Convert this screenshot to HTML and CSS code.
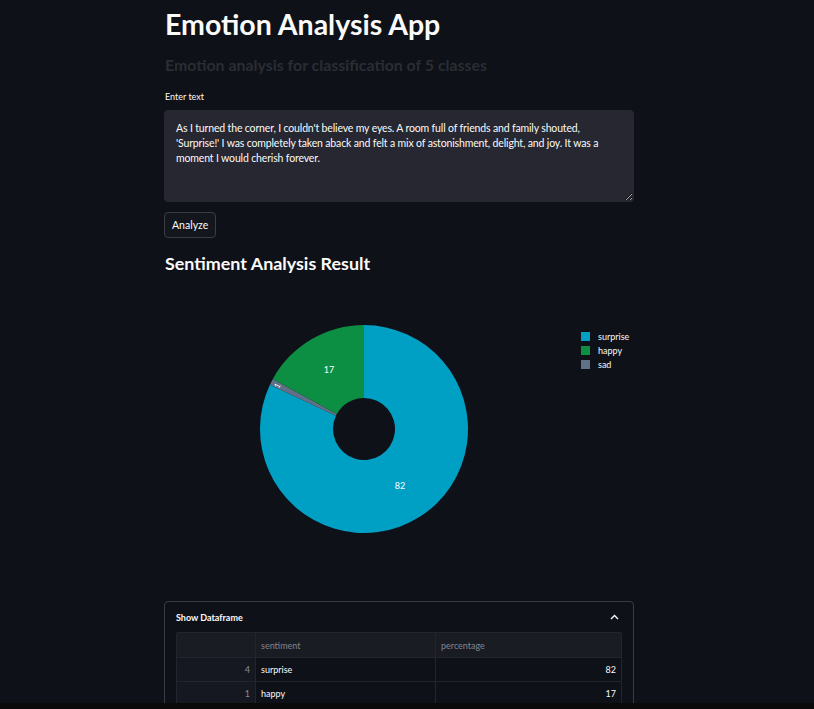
FILE: index.html
```html
<!DOCTYPE html>
<html lang="en">
<head>
<meta charset="utf-8">
<title>Emotion Analysis App</title>
<link rel="stylesheet" href="styles.css">
</head>
<body>
<main class="main">
  <h1 class="title">Emotion Analysis App</h1>
  <h3 class="subtitle">Emotion analysis for classification of 5 classes</h3>
  <label class="label" for="txt">Enter text</label>
  <div class="textarea-wrap">
    <textarea id="txt" class="textarea">As I turned the corner, I couldn't believe my eyes. A room full of friends and family shouted, 'Surprise!' I was completely taken aback and felt a mix of astonishment, delight, and joy. It was a moment I would cherish forever.</textarea>
  </div>
  <button class="btn">Analyze</button>
  <h2 class="h2">Sentiment Analysis Result</h2>
  <svg class="chart" width="470" height="300" viewBox="0 0 470 300">
    <path d="M200,42 A104,104 0 1 1 105.90,101.72 L171.95,132.80 A31,31 0 1 0 200,115 Z" fill="#009fc4"/>
    <path d="M105.90,101.72 A104,104 0 0 1 108.86,95.89 L172.83,131.06 A31,31 0 0 0 171.95,132.80 Z" fill="#5f7087"/>
    <path d="M108.86,95.89 A104,104 0 0 1 200,42 L200,115 A31,31 0 0 0 172.83,131.06 Z" fill="#0c8f43"/>
    <text class="slice-label" x="236" y="206" text-anchor="middle">82</text>
    <text class="slice-label" x="165" y="90" text-anchor="middle">17</text>
    <text class="slice-label small" x="114" y="105" text-anchor="middle" transform="rotate(-63 114 103)">1</text>
    <rect x="417" y="49" width="9" height="9" fill="#009fc4"/>
    <rect x="417" y="63" width="9" height="9" fill="#0c8f43"/>
    <rect x="417" y="77" width="9" height="9" fill="#5f7087"/>
    <text class="legend" x="434" y="57">surprise</text>
    <text class="legend" x="434" y="71">happy</text>
    <text class="legend" x="434" y="85">sad</text>
  </svg>
  <section class="expander">
    <div class="exp-head">
      <span class="exp-title">Show Dataframe</span>
      <svg class="chev" width="9" height="6" viewBox="0 0 9 6"><path d="M1 5 L4.5 1.5 L8 5" fill="none" stroke="#fafafa" stroke-width="1.4"/></svg>
    </div>
    <div class="table">
      <div class="row head">
        <div class="cell idx"></div>
        <div class="cell">sentiment</div>
        <div class="cell">percentage</div>
      </div>
      <div class="row">
        <div class="cell idx num">4</div>
        <div class="cell">surprise</div>
        <div class="cell num">82</div>
      </div>
      <div class="row">
        <div class="cell idx num">1</div>
        <div class="cell">happy</div>
        <div class="cell num">17</div>
      </div>
    </div>
  </section>
</main>
<div class="bottom-bar"></div>
</body>
</html>
```
FILE: styles.css
```css
html, body {
  margin: 0;
  padding: 0;
  background: #0e1117;
  overflow: hidden;
  height: 709px;
}
body {
  font-family: "Lato", "Noto Sans", sans-serif;
  color: #fafafa;
}
.main {
  width: 470px;
  margin-left: 164px;
  display: flex;
  flex-direction: column;
  align-items: flex-start;
}
.title {
  margin: 6px 0 0 1px;
  font-size: 28.5px;
  line-height: 36px;
  font-weight: 700;
  color: #fafafa;
}
.subtitle {
  margin: 13px 0 0 1px;
  font-size: 15.9px;
  line-height: 20px;
  font-weight: 700;
  color: #2a2d34;
}
.label {
  margin: 16px 0 0 1px;
  font-size: 9px;
  line-height: 12px;
}
.textarea-wrap {
  margin-top: 7px;
  width: 470px;
}
.textarea {
  box-sizing: border-box;
  display: block;
  width: 470px;
  height: 92px;
  background: #262730;
  border: 1px solid #262730;
  border-radius: 4px;
  color: #fafafa;
  font-family: inherit;
  font-size: 10.5px;
  letter-spacing: -0.15px;
  line-height: 15px;
  padding: 10px 11px;
  resize: vertical;
  outline: none;
}
.btn {
  margin-top: 10px;
  height: 26px;
  padding: 0 7px;
  background: #13161d;
  border: 1px solid #3b3d44;
  border-radius: 4px;
  color: #fafafa;
  font-family: inherit;
  font-size: 10.5px;
}
.h2 {
  margin: 13px 0 0 1px;
  font-size: 17.9px;
  line-height: 24px;
  font-weight: 700;
}
.chart {
  margin-top: 8px;
  display: block;
}
.slice-label {
  font-family: "Lato", sans-serif;
  font-size: 9px;
  fill: #ffffff;
}
.slice-label.small { font-size: 8px; }
.legend {
  font-family: "Lato", sans-serif;
  font-size: 9px;
  fill: #fafafa;
}
.expander {
  margin-top: 18px;
  box-sizing: border-box;
  width: 470px;
  border: 1px solid #3a3c44;
  border-radius: 4px;
  padding: 0 11px 20px;
}
.exp-head {
  height: 30px;
  display: flex;
  align-items: center;
  justify-content: space-between;
  padding-right: 3px;
}
.exp-title {
  font-size: 9px;
  font-weight: 700;
}
.table {
  border: 1px solid #22252d;
  border-radius: 2px;
}
.row {
  display: grid;
  grid-template-columns: 78px 180px 1fr;
  height: 23px;
  border-top: 1px solid #22252d;
}
.row.head {
  border-top: none;
  height: 24px;
  background: #1a1c24;
  color: #80848f;
}
.cell {
  display: flex;
  align-items: center;
  padding: 0 5px;
  font-size: 9px;
  border-left: 1px solid #22252d;
}
.cell.idx { border-left: none; background: #151820; color: #8a8d96; }
.row.head .cell.idx { background: #1a1c24; }
.cell.num { justify-content: flex-end; }
.row:not(.head) .cell:not(.idx) { color: #fafafa; }
.bottom-bar {
  position: fixed;
  left: 0;
  right: 0;
  bottom: 0;
  height: 6px;
  background: #0a0a0b;
}
```
